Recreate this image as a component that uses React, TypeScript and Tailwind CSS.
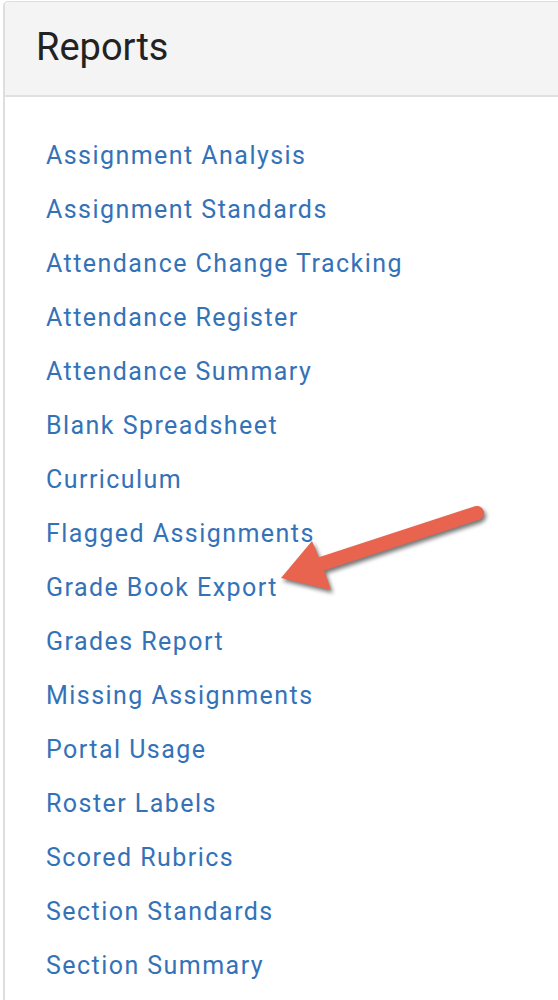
import React from "react";

const links = [
  "Assignment Analysis",
  "Assignment Standards",
  "Attendance Change Tracking",
  "Attendance Register",
  "Attendance Summary",
  "Blank Spreadsheet",
  "Curriculum",
  "Flagged Assignments",
  "Grade Book Export",
  "Grades Report",
  "Missing Assignments",
  "Portal Usage",
  "Roster Labels",
  "Scored Rubrics",
  "Section Standards",
  "Section Summary",
];

export default function App() {
  return (
    <div className="relative w-[558px] h-[1000px] overflow-hidden bg-white pl-[3px] pt-px" style={{ fontFamily: "Roboto, 'Liberation Sans', sans-serif" }}>
      <div className="h-[1100px] border-l-2 border-t border-[#dedede] rounded-tl-[5px] bg-white">
        <div className="h-[95px] bg-[#f4f4f4] border-b-2 border-[#e0e0e0] rounded-tl-[5px] pl-[31px] flex items-center">
          <span className="text-[38px] text-[#222222] leading-none pb-[4px]">Reports</span>
        </div>
        <ul className="pt-[31px] pl-[41px] flex flex-col">
          {links.map((l) => (
            <li key={l} className="h-[54px] flex items-center">
              <a className="text-[25px] text-[#3472b8] leading-none tracking-[1.45px]">{l}</a>
            </li>
          ))}
        </ul>
      </div>
      <svg
        className="absolute left-[270px] top-[495px] drop-shadow-[2px_3px_2px_rgba(0,0,0,0.55)]"
        width="230"
        height="120"
        viewBox="0 0 230 120"
      >
        <line x1="207" y1="18" x2="48" y2="70" stroke="#e8644f" strokeWidth="14" strokeLinecap="round" />
        <polygon points="11,83 42,46 52,69 61,95" fill="#e8644f" />
      </svg>
    </div>
  );
}
